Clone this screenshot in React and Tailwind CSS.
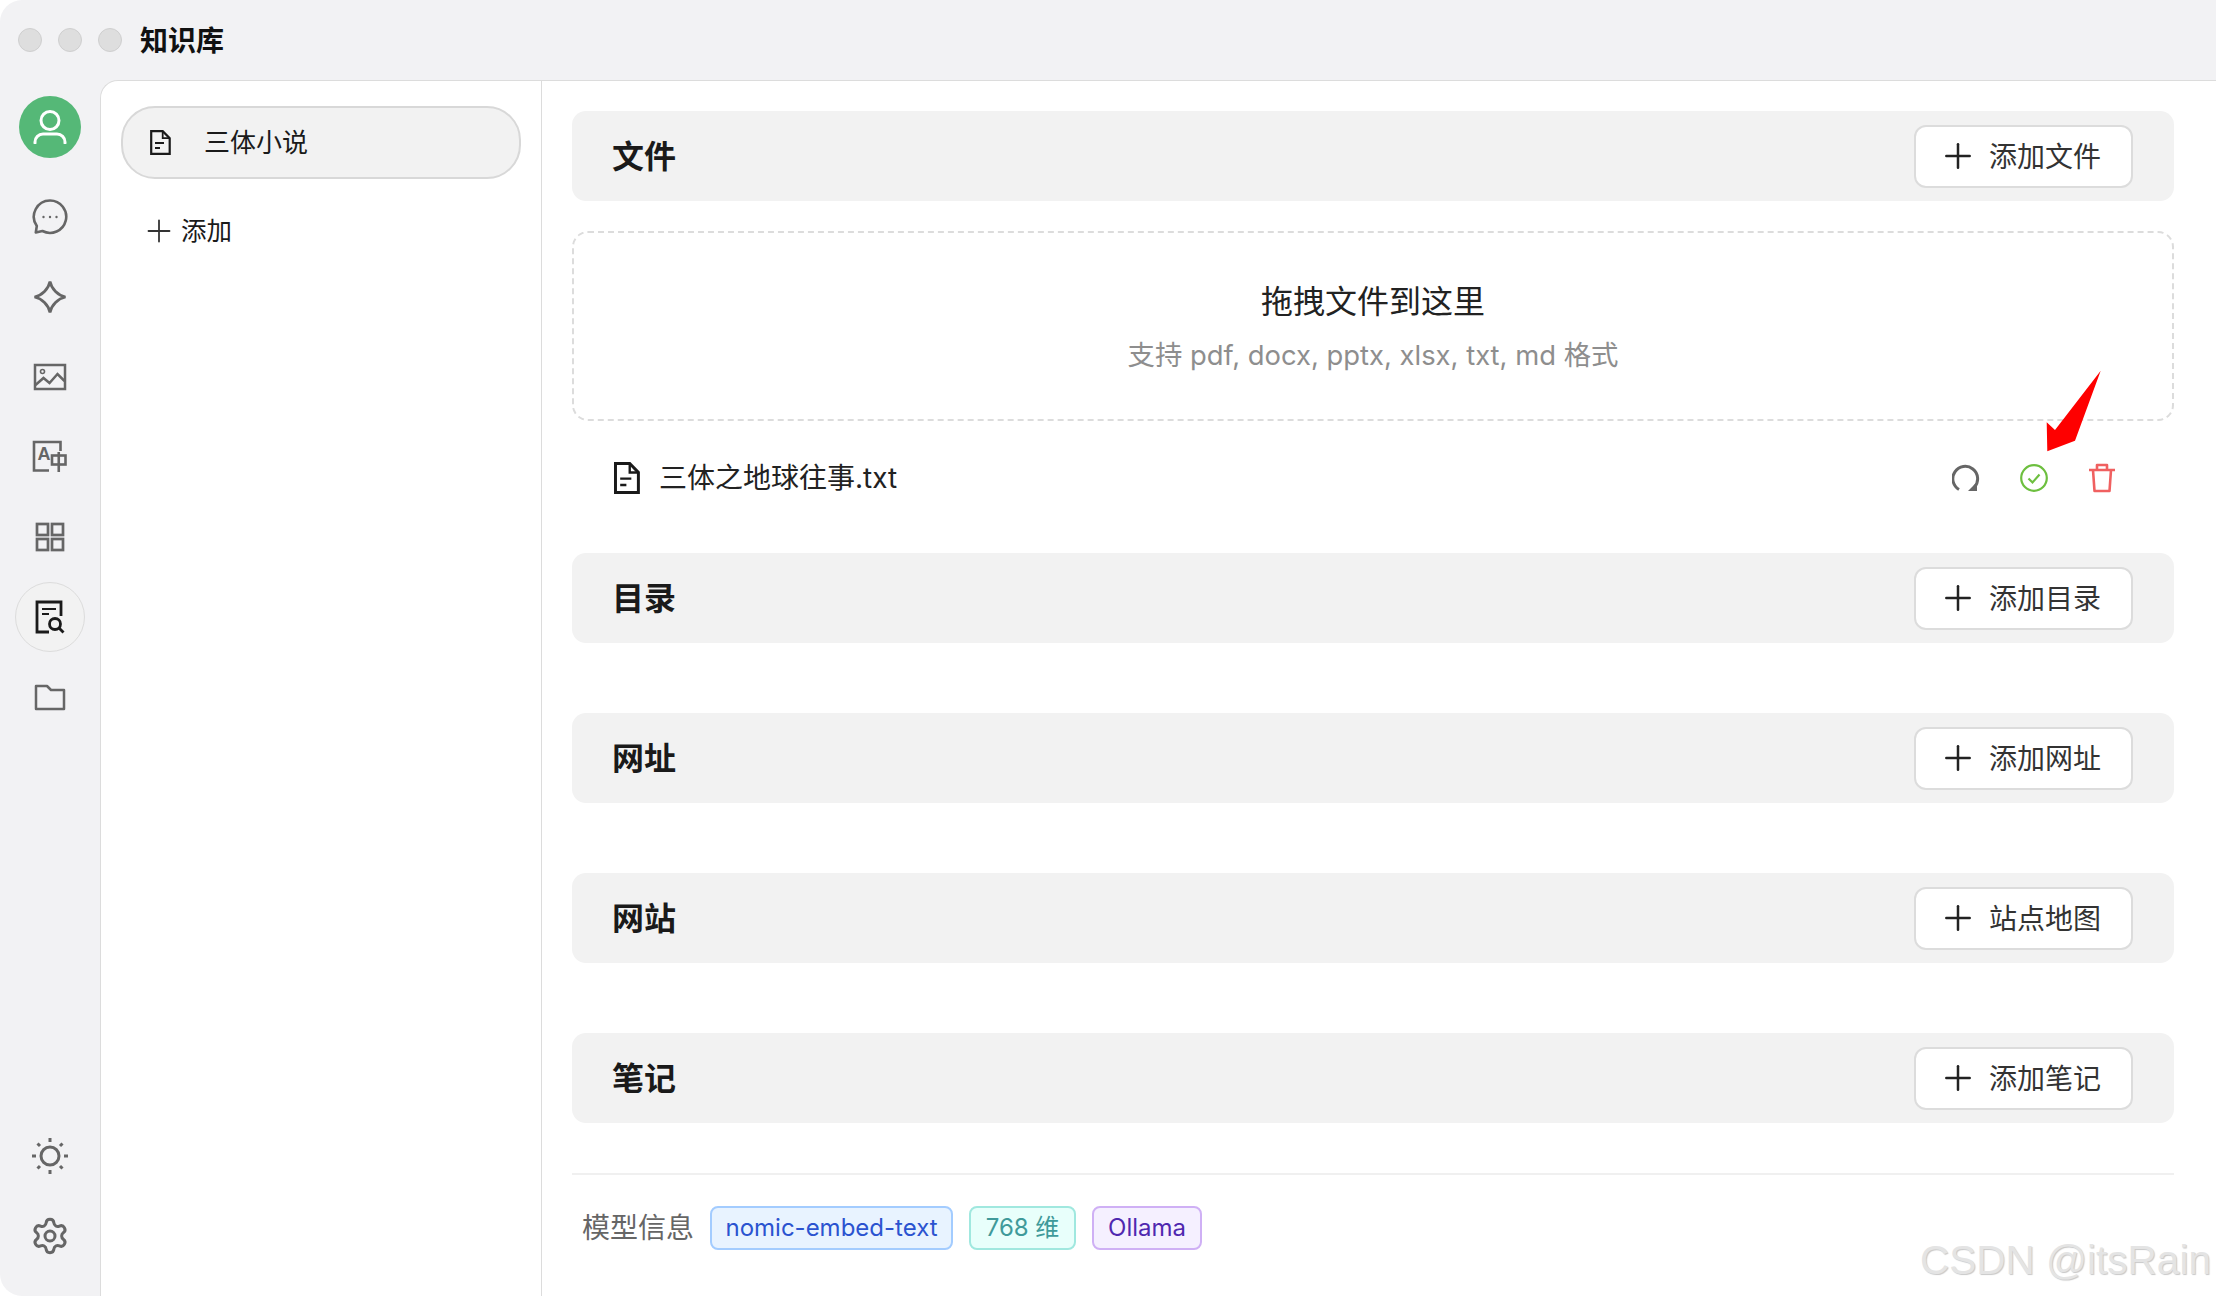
import React from 'react';
import { Plus, Settings } from 'lucide-react';

const IconSlot = ({ active, children }) => (
  <div className="h-20 flex items-center justify-center">
    <div className={`w-[70px] h-[70px] rounded-full flex items-center justify-center ${active ? 'bg-[#f2f2f2] border border-[#dcdcdc]' : ''}`}>
      {children}
    </div>
  </div>
);

const ChatIcon = () => (
  <svg width="36" height="36" viewBox="0 0 36 36" fill="none" stroke="#666" strokeWidth="2.6" strokeLinejoin="round">
    <path d="M18 1.500a16.200 16.200 0 1 1-7.600 30.500l-6.600 1.400 1-6.400A16.200 16.200 0 0 1 18 1.500z" />
    <circle cx="11.500" cy="18" r="1.200" fill="#666" stroke="none" />
    <circle cx="18" cy="18" r="1.200" fill="#666" stroke="none" />
    <circle cx="24.500" cy="18" r="1.200" fill="#666" stroke="none" />
  </svg>
);

const StarIcon = () => (
  <svg width="36" height="36" viewBox="0 0 36 36" fill="none" stroke="#666" strokeWidth="2.800" strokeLinejoin="miter">
    <path d="M18 2.500C19.500 10 26 16.500 33.500 18 26 19.500 19.500 26 18 33.500 16.500 26 10 19.500 2.500 18 10 16.500 16.500 10 18 2.500z" />
  </svg>
);

const ImageIcon = () => (
  <svg width="34" height="28" viewBox="0 0 34 28" fill="none" stroke="#666" strokeWidth="2.500">
    <rect x="2" y="2" width="30" height="24" />
    <circle cx="9.500" cy="8.500" r="2" strokeWidth="1.600" />
    <path d="M2.500 22l8-7 6 5 8-9 7 7" />
  </svg>
);

const TranslateIcon = () => (
  <svg width="36" height="34" viewBox="0 0 36 34" fill="none" stroke="#666" strokeWidth="2.600">
    <path d="M28.500 11V2H2v28.500h15" />
    <text x="5.500" y="19.500" fontSize="18" fontWeight="700" fill="#666" stroke="none" fontFamily="Liberation Sans, sans-serif">A</text>
    <rect x="20" y="15.500" width="13.500" height="9" />
    <path d="M26.750 12v20" />
  </svg>
);

const GridIcon = () => (
  <svg width="30" height="30" viewBox="0 0 30 30" fill="none" stroke="#666" strokeWidth="2.700">
    <rect x="2" y="2" width="11" height="11" />
    <rect x="17" y="2" width="11" height="11" />
    <rect x="2" y="17" width="11" height="11" />
    <rect x="17" y="17" width="11" height="11" />
  </svg>
);

const KnowledgeIcon = () => (
  <svg width="30" height="34" viewBox="0 0 30 34" fill="none" stroke="#1a1a1a" strokeWidth="2.800">
    <path d="M14 32H2V2h24v14" />
    <path d="M7 9h14M7 14h7" strokeWidth="2.200" />
    <circle cx="20" cy="24" r="5.500" />
    <path d="M24 28l4.500 4.500" />
  </svg>
);

const FolderIcon = () => (
  <svg width="32" height="28" viewBox="0 0 32 28" fill="none" stroke="#666" strokeWidth="2.500" strokeLinejoin="round">
    <path d="M2 3h11l4 4h13v19H2z" />
  </svg>
);

const SunIcon = () => (
  <svg width="38" height="38" viewBox="0 0 38 38" fill="none" stroke="#666" strokeWidth="3">
    <circle cx="19" cy="19" r="9" />
    <path d="M19 1v4M19 33v4M1 19h4M33 19h4M6.500 6.500l2.500 2.500M29 29l2.500 2.500M6.500 31.500L9 29M29 9l2.500-2.500" />
  </svg>
);

const DocIcon = ({ size = 'w-[21px] h-[25px]', stroke = 2.2 }) => (
  <svg className={size} viewBox="0 0 21 25" fill="none" stroke="#1a1a1a" strokeWidth={stroke} preserveAspectRatio="none">
    <path d="M1.200 1.200h11.500l7 7v15.600H1.200z" />
    <path d="M12.700 1.200v7h7" strokeWidth={stroke * 0.8} />
    <path d="M5 13h9M5 18h5" strokeWidth={stroke * 0.8} />
  </svg>
);

const RefreshIcon = () => (
  <svg width="28" height="28" viewBox="0 0 28 28" fill="none" stroke="#666" strokeWidth="3">
    <path d="M7 25.500A12.400 12.400 0 1 1 22.500 23" />
    <path d="M16 27h9v-9z" fill="#666" stroke="none" />
  </svg>
);

const CheckIcon = () => (
  <svg width="28" height="28" viewBox="0 0 28 28" fill="none" stroke="#6dbf3f" strokeWidth="2.200">
    <circle cx="14" cy="14" r="12.800" />
    <path d="M8.500 14.500l4 4 7-8" />
  </svg>
);

const TrashIcon = () => (
  <svg width="28" height="30" viewBox="0 0 28 30" fill="none" stroke="#f06060" strokeWidth="2.600" strokeLinejoin="round">
    <path d="M1 7h26M5 7l1.500 21h15L23 7" />
    <path d="M9 7V2h10v5" />
  </svg>
);

const SectionBar = ({ title, action }) => (
  <div className="h-[90px] bg-[#f2f2f2] rounded-[14px] flex items-center justify-between pl-10 pr-[41px]">
    <h3 className="pt-[2px] text-[32px] font-semibold text-[#1a1a1a]">{title}</h3>
    <button className="w-[219px] h-[63px] pr-[8px] bg-white border-2 border-[#dcdcdc] rounded-[12px] flex items-center justify-center gap-[11px] text-[28px] text-[#333]">
      <Plus className="w-[40px] h-[40px]" strokeWidth={1.500} color="#222" />
      <span className="pt-[2px]">{action}</span>
    </button>
  </div>
);

export default function App() {
  return (
    <div className="relative w-screen h-screen bg-white overflow-hidden font-[Inter,'Noto_Sans_CJK_SC',sans-serif]">
      <div className="w-full h-full flex flex-col bg-[#f2f2f4] rounded-tl-[22px] rounded-bl-[22px]">
        {/* Title bar */}
        <div className="h-20 flex-shrink-0 flex items-center pl-[18px]">
          <div className="flex items-center gap-4">
            <span className="w-6 h-6 rounded-full bg-[#dedede] border border-[#cfcfcf]"></span>
            <span className="w-6 h-6 rounded-full bg-[#dedede] border border-[#cfcfcf]"></span>
            <span className="w-6 h-6 rounded-full bg-[#dedede] border border-[#cfcfcf]"></span>
          </div>
          <span className="ml-[18px] pt-[2px] text-[28px] font-semibold text-[#111]">知识库</span>
        </div>

        <div className="flex flex-1 min-h-0">
          {/* Icon rail */}
          <aside className="w-[100px] flex-shrink-0 flex flex-col pb-5">
            <div className="flex justify-center pt-4 pb-[19px]">
              <div className="w-[62px] h-[62px] rounded-full bg-[#55b877] flex items-center justify-center">
                <svg width="36" height="34" viewBox="0 0 36 34" fill="none" stroke="#fff" strokeWidth="3">
                  <circle cx="18" cy="10.500" r="9" />
                  <path d="M3 33v-1a8 8 0 0 1 8-8h14a8 8 0 0 1 8 8v1" strokeLinecap="round" />
                </svg>
              </div>
            </div>
            <IconSlot><ChatIcon /></IconSlot>
            <IconSlot><StarIcon /></IconSlot>
            <IconSlot><ImageIcon /></IconSlot>
            <IconSlot><TranslateIcon /></IconSlot>
            <IconSlot><GridIcon /></IconSlot>
            <IconSlot active><KnowledgeIcon /></IconSlot>
            <IconSlot><FolderIcon /></IconSlot>
            <div className="flex-1"></div>
            <IconSlot><SunIcon /></IconSlot>
            <IconSlot><Settings className="w-[40px] h-[40px]" color="#666" strokeWidth={1.800} /></IconSlot>
          </aside>

          <div className="flex-1 min-w-0 flex bg-white border-l border-t border-[#dcdcdc] rounded-tl-[18px]">
            {/* Base list */}
            <div className="w-[441px] flex-shrink-0 border-r border-[#dcdcdc] pl-5 pr-[20px] pt-[25px]">
              <div className="h-[73px] bg-[#f2f2f2] border-2 border-[#d8d8d8] rounded-[34px] flex items-center pl-[27px]">
                <DocIcon />
                <span className="ml-[33px] text-[26px] text-[#1a1a1a]">三体小说</span>
              </div>
              <div className="mt-[33px] h-[38px] flex items-center pl-[20px] text-[25.500px] text-[#1a1a1a]">
                <Plus className="w-[36px] h-[36px]" strokeWidth={1.200} color="#333" />
                <span className="ml-[4px]">添加</span>
              </div>
            </div>

            {/* Main */}
            <main className="flex-1 min-w-0 pl-[30px] pr-[42px] pt-[30px]">
              <SectionBar title="文件" action="添加文件" />
              <div className="mt-[30px] h-[190px] pt-[2px] border-2 border-dashed border-[#dcdcdc] rounded-[16px] flex flex-col items-center justify-center">
                <p className="text-[32px] leading-[42px] text-[#222]">拖拽文件到这里</p>
                <p className="mt-[14px] text-[27.400px] leading-[36px] text-[#8e8e8e]">支持 pdf, docx, pptx, xlsx, txt, md 格式</p>
              </div>
              <div className="mt-[29px] mb-[47px] h-[56px] flex items-center pl-[42px] pr-[58px]">
                <DocIcon size="w-[26px] h-[32px]" stroke={2.4} />
                <span className="ml-[19px] flex-1 text-[28px] text-[#222]">三体之地球往事.txt</span>
                <div className="flex items-center gap-[40px]">
                  <RefreshIcon />
                  <CheckIcon />
                  <TrashIcon />
                </div>
              </div>

              <div className="flex flex-col gap-[70px]">
                <SectionBar title="目录" action="添加目录" />
                <SectionBar title="网址" action="添加网址" />
                <SectionBar title="网站" action="站点地图" />
                <SectionBar title="笔记" action="添加笔记" />
              </div>

              <div className="mt-[50px] border-t-2 border-[#f0f0f0] pt-[31px] pl-[10px] flex items-center">
                <span className="text-[28px] text-[#666]">模型信息</span>
                <span className="ml-[16px] h-[44px] w-[243px] flex items-center justify-center rounded-[8px] border-2 border-[#a3ccff] bg-[#e8f3ff] text-[24px] text-[#2b53d0]">nomic-embed-text</span>
                <span className="ml-[16px] h-[44px] w-[107px] flex items-center justify-center rounded-[8px] border-2 border-[#a0e8df] bg-[#e8fffb] text-[24px] text-[#3f9a9a]">768 维</span>
                <span className="ml-[16px] h-[44px] w-[110px] flex items-center justify-center rounded-[8px] border-2 border-[#cfb0f5] bg-[#f5f0ff] text-[24px] text-[#5028b0]">Ollama</span>
              </div>
            </main>
          </div>
        </div>
      </div>

      {/* Annotation arrow pasted over the shot */}
      <svg className="absolute left-[2040px] top-[365px]" width="66" height="92" viewBox="0 0 66 92">
        <path d="M60.700 5.700L35 75.700 7.300 86.300 6.700 57.300 15 65z" fill="#fe0000" />
      </svg>

      {/* Watermark */}
      <span className="absolute left-[1920px] top-[1236px] text-[40.500px] leading-[48px] text-[#e4e4e4] [text-shadow:1px_1px_1px_#c8c8c8] font-['Liberation_Sans',sans-serif] whitespace-nowrap">CSDN @itsRain</span>
    </div>
  );
}
